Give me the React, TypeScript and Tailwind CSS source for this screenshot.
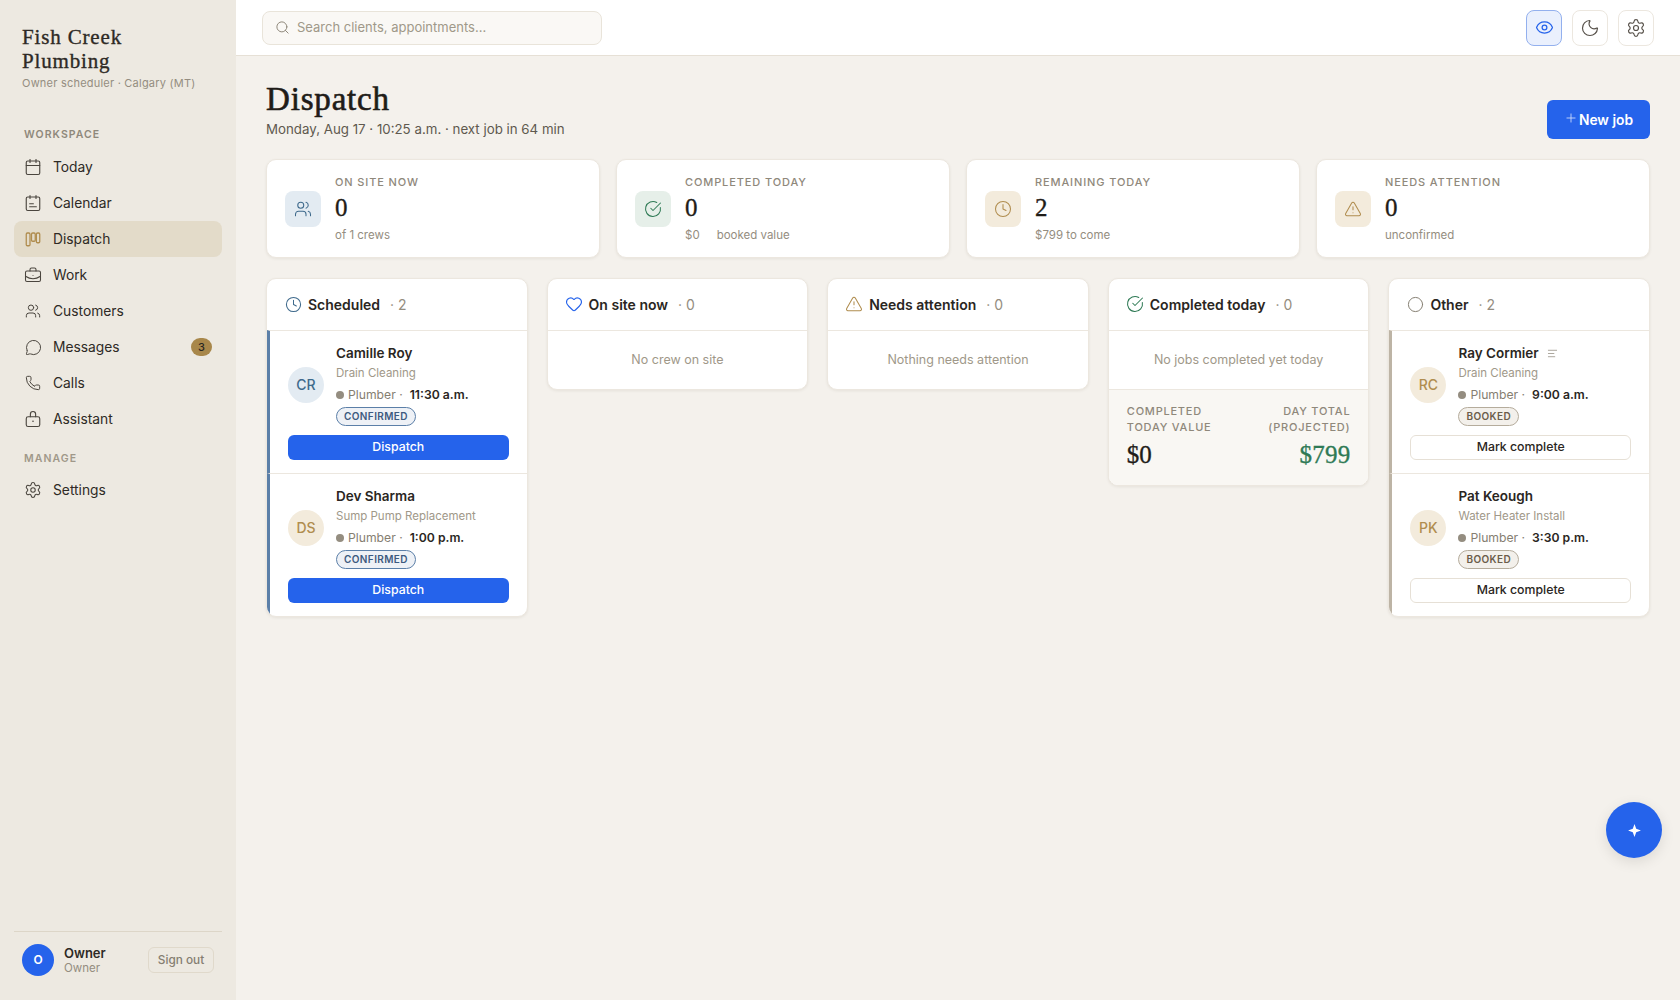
import React from "react";
import {
  AlignLeft,
  BriefcaseBusiness,
  Calendar,
  Circle,
  CircleCheckBig,
  Clock,
  Eye,
  Heart,
  MessageCircle,
  Moon,
  Phone,
  Plus,
  Search,
  Settings,
  TriangleAlert,
  Users,
} from "lucide-react";

const serif = "font-['Liberation_Serif',serif] [-webkit-text-stroke:0.35px_currentColor]";

const CalendarLines = ({ size = 18 }: { size?: number }) => (
  <svg width={size} height={size} viewBox="0 0 24 24" fill="none" stroke="currentColor" strokeWidth={1.5} strokeLinecap="round" strokeLinejoin="round">
    <rect x="3" y="4" width="18" height="18" rx="2" />
    <path d="M8 2v4M16 2v4M7.5 13h5M7.5 17h9" />
  </svg>
);

const Kanban = ({ size = 18 }: { size?: number }) => (
  <svg width={size} height={size} viewBox="0 0 24 24" fill="none" stroke="currentColor" strokeWidth={1.7} strokeLinecap="round" strokeLinejoin="round">
    <rect x="3" y="4" width="5" height="17" rx="1.5" />
    <rect x="10" y="4" width="5" height="11" rx="1.5" />
    <rect x="16.5" y="4" width="4.5" height="13" rx="1.5" />
  </svg>
);

const Assistant = ({ size = 18 }: { size?: number }) => (
  <svg width={size} height={size} viewBox="0 0 24 24" fill="none" stroke="currentColor" strokeWidth={1.5} strokeLinecap="round" strokeLinejoin="round">
    <rect x="3" y="9" width="18" height="13" rx="2.5" />
    <path d="M8.5 9V5.5a3.5 3.5 0 0 1 7 0V9" />
    <path d="M12 15v.01" strokeWidth={2.2} />
  </svg>
);

const nav = [
  { label: "Today", icon: <Calendar size={18} strokeWidth={1.5} /> },
  { label: "Calendar", icon: <CalendarLines /> },
  { label: "Dispatch", icon: <Kanban />, active: true },
  { label: "Work", icon: <BriefcaseBusiness size={19} strokeWidth={1.4} /> },
  { label: "Customers", icon: <Users size={16} strokeWidth={1.5} /> },
  { label: "Messages", icon: <MessageCircle size={17} strokeWidth={1.4} />, badge: "3" },
  { label: "Calls", icon: <Phone size={16} strokeWidth={1.5} /> },
  { label: "Assistant", icon: <Assistant /> },
];

const NavItem = ({ label, icon, active, badge }: { label: string; icon: React.ReactNode; active?: boolean; badge?: string }) => (
  <div className={`flex h-9 items-center rounded-lg pl-[10px] pr-[10px] text-[13.8px] text-[#2e2a25] ${active ? "bg-[#e3dbc9]" : ""}`}>
    <span className={`flex w-[18px] justify-center ${active ? "text-[#b08d4f]" : "text-[#4a453e]"}`}>{icon}</span>
    <span className="ml-[11px] flex-1">{label}</span>
    {badge && (
      <span className="flex h-[18px] w-[21px] items-center justify-center rounded-full bg-[#a8874a] text-[11px] font-medium text-[#2a2622]">{badge}</span>
    )}
  </div>
);

const Sidebar = () => (
  <aside className="flex w-[236px] shrink-0 flex-col bg-[#ede9e1] px-[14px]">
    <div className="px-2 pt-[25px]">
      <div className={`${serif} text-[21px] leading-[24px] tracking-[0.04em] text-[#2e2a25]`}>
        Fish Creek
        <br />
        Plumbing
      </div>
      <div className="mt-[2px] text-[11px] leading-[16px] tracking-[0.02em] text-[#948d80]">Owner scheduler · Calgary (MT)</div>
    </div>
    <div className="mt-[36px] px-[10px] text-[10.5px] font-semibold leading-[16px] tracking-[0.1em] text-[#8f887b]">WORKSPACE</div>
    <nav className="mt-[6px] flex flex-col">
      {nav.map((n) => (
        <NavItem key={n.label} {...n} />
      ))}
    </nav>
    <div className="mt-[14px] px-[10px] text-[10.5px] font-semibold leading-[16px] tracking-[0.1em] text-[#a09889]">MANAGE</div>
    <div className="mt-[5px]">
      <NavItem label="Settings" icon={<Settings size={20} strokeWidth={1.4} />} />
    </div>
    <div className="mt-auto mb-[24px] flex items-center border-t border-[#ddd6c8] px-2 pt-[12px]">
      <div className="flex h-8 w-8 items-center justify-center rounded-full bg-[#2563eb] text-[12px] font-semibold text-white">O</div>
      <div className="ml-[10px] flex-1">
        <div className="text-[13px] font-semibold leading-[16px] text-[#2e2a25]">Owner</div>
        <div className="text-[11.5px] leading-[14px] text-[#948d80]">Owner</div>
      </div>
      <div className="flex h-[26px] w-[66px] items-center justify-center rounded-md border border-[#e0d9cb] pt-[1px] text-[11.8px] font-medium text-[#857e71]">Sign out</div>
    </div>
  </aside>
);

const TopBar = () => (
  <header className="flex h-[56px] shrink-0 items-center justify-between border-b border-[#e6e0d6] bg-white pl-[26px] pr-[26px]">
    <div className="flex h-[34px] w-[340px] items-center rounded-lg border border-[#e9e4da] bg-[#faf8f5] pl-[12px] text-[#a09889]">
      <Search size={15} strokeWidth={1.6} className="text-[#8f887b]" />
      <span className="ml-[7px] pt-[1px] text-[13px]">Search clients, appointments...</span>
    </div>
    <div className="flex gap-[10px]">
      <div className="flex h-9 w-9 items-center justify-center rounded-lg border border-[#93b0ee] bg-[#eaf0fd] text-[#2563eb]">
        <Eye size={19} strokeWidth={1.6} />
      </div>
      <div className="flex h-9 w-9 items-center justify-center rounded-lg border border-[#ece7df] bg-white text-[#57514a]">
        <Moon size={20} strokeWidth={1.4} />
      </div>
      <div className="flex h-9 w-9 items-center justify-center rounded-lg border border-[#ece7df] bg-white text-[#57514a]">
        <Settings size={20} strokeWidth={1.4} />
      </div>
    </div>
  </header>
);

const stats = [
  { label: "ON SITE NOW", value: "0", sub: <>of 1 crews</>, tone: "bg-[#e3ebf2] text-[#3f6a8c]", icon: <Users size={18} strokeWidth={1.4} /> },
  {
    label: "COMPLETED TODAY",
    value: "0",
    sub: (
      <>
        $0<span className="ml-[17px]">booked value</span>
      </>
    ),
    tone: "bg-[#e6efe9] text-[#2f7a55]",
    icon: <CircleCheckBig size={18} strokeWidth={1.4} />,
  },
  { label: "REMAINING TODAY", value: "2", sub: <>$799 to come</>, tone: "bg-[#f3ebdc] text-[#b08d4f]", icon: <Clock size={18} strokeWidth={1.4} /> },
  { label: "NEEDS ATTENTION", value: "0", sub: <>unconfirmed</>, tone: "bg-[#f3ebdc] text-[#b08d4f]", icon: <TriangleAlert size={18} strokeWidth={1.4} /> },
];

const cardCls = "rounded-[10px] border border-[#ece7df] bg-white shadow-[0_1px_3px_rgba(60,50,30,0.08)]";

const StatCard = ({ label, value, sub, tone, icon }: (typeof stats)[number]) => (
  <div className={`${cardCls} flex h-[99px] items-center pl-[18px]`}>
    <div className={`flex h-9 w-9 items-center justify-center rounded-lg ${tone}`}>{icon}</div>
    <div className="ml-[14px]">
      <div className="text-[11px] font-medium leading-[14px] tracking-[0.08em] text-[#8f887b]">{label}</div>
      <div className={`${serif} mt-[4px] text-[25px] leading-[30px] text-[#1f1c18]`}>{value}</div>
      <div className="mt-[4px] text-[11.5px] leading-[16px] text-[#948d80]">{sub}</div>
    </div>
  </div>
);

const Initials = ({ text, tone }: { text: string; tone: string }) => (
  <div className={`flex h-9 w-9 shrink-0 items-center justify-center rounded-full text-[14px] font-medium ${tone}`}>{text}</div>
);

type Job = {
  name: string;
  initials: string;
  service: string;
  time: string;
  status: string;
  avatar: string;
  note?: boolean;
};

const JobRow = ({ job, kind }: { job: Job; kind: "dispatch" | "complete" }) => (
  <div className={`border-l-[3px] border-t border-t-[#ece7df] px-[18px] pb-[13px] pt-[12px] ${kind === "dispatch" ? "border-l-[#5b7fa8]" : "border-l-[#bdb4a5]"}`}>
    <div className="flex items-center gap-3">
      <Initials text={job.initials} tone={job.avatar} />
      <div>
        <div className="flex items-center pt-[1px] text-[13.5px] font-semibold leading-[19px] text-[#2a2622]">
          {job.name}
          {job.note && <AlignLeft size={11} strokeWidth={1.6} className="ml-[8px] text-[#8f887b]" />}
        </div>
        <div className="mt-[1px] text-[11.5px] leading-[18px] text-[#a09889]">{job.service}</div>
        <div className="mt-[4px] flex items-center text-[12.2px] leading-[18px] text-[#857e71]">
          <span className="mr-[4px] h-2 w-2 rounded-full bg-[#948d80]" />
          Plumber ·<span className="ml-[7px] font-semibold text-[#2a2622]">{job.time}</span>
        </div>
        <div className="mt-[3px] flex">
          {kind === "dispatch" ? (
            <span className="flex h-[19px] items-center rounded-full border border-[#5b7fa8] bg-[#eef1f6] px-[7px] text-[10px] font-semibold tracking-[0.04em] text-[#3d5a7f]">{job.status}</span>
          ) : (
            <span className="flex h-[19px] items-center rounded-full border border-[#b5ac9c] bg-[#f3f0eb] px-[7px] text-[10px] font-semibold tracking-[0.04em] text-[#6b5d4a]">{job.status}</span>
          )}
        </div>
      </div>
    </div>
    {kind === "dispatch" ? (
      <div className="mt-[9px] flex h-[25px] items-center justify-center rounded-md bg-[#2563eb] text-[12.3px] font-medium text-white">Dispatch</div>
    ) : (
      <div className="mt-[9px] flex h-[25px] items-center justify-center rounded-md border border-[#e6e0d6] bg-white text-[12.3px] font-medium text-[#2a2622]">Mark complete</div>
    )}
  </div>
);

const ColumnHeader = ({ icon, title, count }: { icon: React.ReactNode; title: string; count: number }) => (
  <div className="flex h-[51px] items-center pb-[1px] pl-[18px]">
    <span className="flex w-[16px] justify-center">{icon}</span>
    <span className="ml-[7px] text-[14px] font-semibold text-[#2a2622]">{title}</span>
    <span className="ml-[10px] text-[14px] text-[#948d80]">· {count}</span>
  </div>
);

const Empty = ({ text }: { text: string }) => (
  <div className="flex h-[59px] items-center justify-center border-t border-[#ece7df] text-[12.5px] text-[#a09889]">{text}</div>
);

const scheduled: Job[] = [
  { name: "Camille Roy", initials: "CR", service: "Drain Cleaning", time: "11:30 a.m.", status: "CONFIRMED", avatar: "bg-[#e3ebf2] text-[#3f6a8c]" },
  { name: "Dev Sharma", initials: "DS", service: "Sump Pump Replacement", time: "1:00 p.m.", status: "CONFIRMED", avatar: "bg-[#f3ebdc] text-[#b08d4f]" },
];

const other: Job[] = [
  { name: "Ray Cormier", initials: "RC", service: "Drain Cleaning", time: "9:00 a.m.", status: "BOOKED", avatar: "bg-[#f3ebdc] text-[#b08d4f]", note: true },
  { name: "Pat Keough", initials: "PK", service: "Water Heater Install", time: "3:30 p.m.", status: "BOOKED", avatar: "bg-[#f3ebdc] text-[#b08d4f]" },
];

const Board = () => (
  <div className="mt-[20px] grid grid-cols-5 items-start gap-[19px]">
    <div className={`${cardCls} overflow-hidden`}>
      <ColumnHeader icon={<Clock size={17} strokeWidth={1.5} className="shrink-0 text-[#3f6a8c]" />} title="Scheduled" count={2} />
      {scheduled.map((j) => (
        <JobRow key={j.name} job={j} kind="dispatch" />
      ))}
    </div>
    <div className={`${cardCls} overflow-hidden`}>
      <ColumnHeader icon={<Heart size={18} strokeWidth={1.5} className="shrink-0 text-[#2563eb]" />} title="On site now" count={0} />
      <Empty text="No crew on site" />
    </div>
    <div className={`${cardCls} overflow-hidden`}>
      <ColumnHeader icon={<TriangleAlert size={18} strokeWidth={1.4} className="shrink-0 text-[#b08d4f]" />} title="Needs attention" count={0} />
      <Empty text="Nothing needs attention" />
    </div>
    <div className={`${cardCls} overflow-hidden`}>
      <ColumnHeader icon={<CircleCheckBig size={18} strokeWidth={1.4} className="shrink-0 text-[#2f7a55]" />} title="Completed today" count={0} />
      <Empty text="No jobs completed yet today" />
      <div className="flex justify-between border-t border-[#ece7df] bg-[#f9f7f3] px-[18px] pb-[15px] pt-[13px]">
        <div>
          <div className="text-[11px] font-medium leading-[16px] tracking-[0.07em] text-[#8f887b]">
            COMPLETED
            <br />
            TODAY VALUE
          </div>
          <div className={`${serif} mt-[5px] text-[25px] leading-[30px] text-[#1f1c18]`}>$0</div>
        </div>
        <div className="text-right">
          <div className="text-[11px] font-medium leading-[16px] tracking-[0.07em] text-[#8f887b]">
            DAY TOTAL
            <br />
            (PROJECTED)
          </div>
          <div className={`${serif} mt-[5px] text-[25px] leading-[30px] tracking-[0.01em] text-[#2f7a55]`}>$799</div>
        </div>
      </div>
    </div>
    <div className={`${cardCls} overflow-hidden`}>
      <ColumnHeader icon={<Circle size={17} strokeWidth={1.4} className="shrink-0 text-[#857e71]" />} title="Other" count={2} />
      {other.map((j) => (
        <JobRow key={j.name} job={j} kind="complete" />
      ))}
    </div>
  </div>
);

export default function App() {
  return (
    <div className="flex h-screen overflow-hidden bg-[#f4f1ec] font-['Inter',sans-serif] text-[#2a2622]">
      <Sidebar />
      <main className="flex flex-1 flex-col">
        <TopBar />
        <div className="px-[30px] pt-[23px]">
          <div className="flex items-end justify-between">
            <div>
              <h1 className="font-['Liberation_Serif',serif] text-[33px] leading-[40px] tracking-[0.025em] text-[#1f1c18] [-webkit-text-stroke:0.6px_currentColor]">Dispatch</h1>
              <p className="text-[13.3px] leading-[20px] text-[#5f594f]">Monday, Aug 17 · 10:25 a.m. · next job in 64 min</p>
            </div>
            <div className="flex h-[39px] w-[103px] items-center justify-center rounded-md bg-[#2563eb] pt-[2px] text-[13.8px] font-semibold text-white">
              <Plus size={14} strokeWidth={1.5} className="mb-[6px] mr-[1px] text-[#cfdcfa]" />
              New job
            </div>
          </div>
          <div className="mt-[20px] grid grid-cols-4 gap-4">
            {stats.map((s) => (
              <StatCard key={s.label} {...s} />
            ))}
          </div>
          <Board />
        </div>
      </main>
      <div className="absolute left-[1606px] top-[802px] flex h-14 w-14 items-center justify-center rounded-full bg-[#2563eb] shadow-[0_4px_14px_rgba(0,0,0,0.1)]">
        <svg width="15" height="15" viewBox="0 0 14 14" fill="white">
          <path d="M7 1 8.6 5.4 13 7 8.6 8.6 7 13 5.4 8.6 1 7 5.4 5.4Z" />
        </svg>
      </div>
    </div>
  );
}
